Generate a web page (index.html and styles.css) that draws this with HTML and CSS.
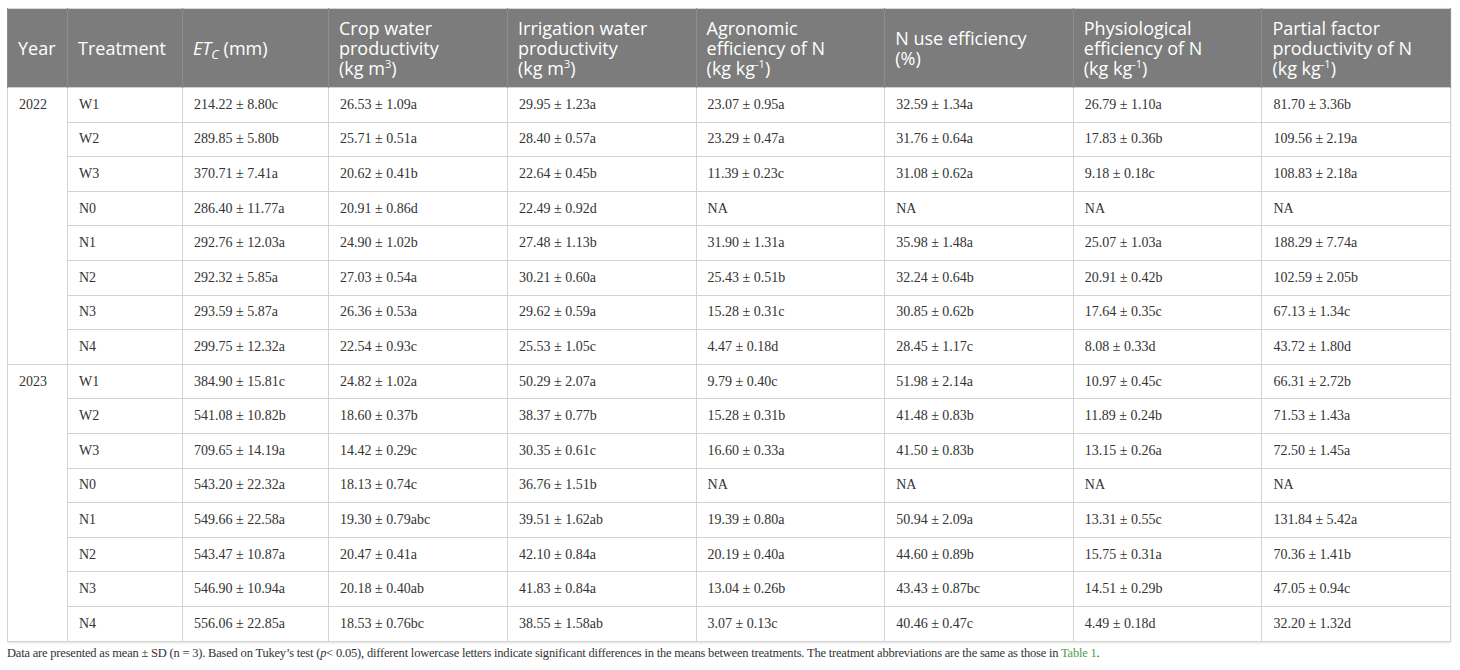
FILE: index.html
```html
<!DOCTYPE html>
<html lang="en">
<head>
    <meta charset="UTF-8">
    <meta name="viewport" content="width=device-width, initial-scale=1.0">
    <title>Water and N use efficiency</title>
    <link rel="stylesheet" href="styles.css">
</head>
<body>
    <div class="table-wrap">
        <table class="data-table">
            <colgroup>
                <col class="c-year">
                <col class="c-treat">
                <col class="c-etc">
                <col class="c-crop">
                <col class="c-wide">
                <col class="c-wide">
                <col class="c-wide">
                <col class="c-wide">
                <col class="c-wide">
            </colgroup>
            <thead>
                <tr>
                    <th>Year</th>
                    <th>Treatment</th>
                    <th><em>ET<sub>C</sub></em> (mm)</th>
                    <th>Crop water<br>productivity<br>(kg m<sup>3</sup>)</th>
                    <th>Irrigation water<br>productivity<br>(kg m<sup>3</sup>)</th>
                    <th>Agronomic<br>efficiency of N<br>(kg kg<sup>-1</sup>)</th>
                    <th>N use efficiency<br>(%)</th>
                    <th>Physiological<br>efficiency of N<br>(kg kg<sup>-1</sup>)</th>
                    <th>Partial factor<br>productivity of N<br>(kg kg<sup>-1</sup>)</th>
                </tr>
            </thead>
            <tbody>
                <tr>
                    <td class="year" rowspan="8">2022</td>
                    <td>W1</td><td>214.22 ± 8.80c</td><td>26.53 ± 1.09a</td><td>29.95 ± 1.23a</td><td>23.07 ± 0.95a</td><td>32.59 ± 1.34a</td><td>26.79 ± 1.10a</td><td>81.70 ± 3.36b</td>
                </tr>
                <tr><td>W2</td><td>289.85 ± 5.80b</td><td>25.71 ± 0.51a</td><td>28.40 ± 0.57a</td><td>23.29 ± 0.47a</td><td>31.76 ± 0.64a</td><td>17.83 ± 0.36b</td><td>109.56 ± 2.19a</td></tr>
                <tr><td>W3</td><td>370.71 ± 7.41a</td><td>20.62 ± 0.41b</td><td>22.64 ± 0.45b</td><td>11.39 ± 0.23c</td><td>31.08 ± 0.62a</td><td>9.18 ± 0.18c</td><td>108.83 ± 2.18a</td></tr>
                <tr><td>N0</td><td>286.40 ± 11.77a</td><td>20.91 ± 0.86d</td><td>22.49 ± 0.92d</td><td>NA</td><td>NA</td><td>NA</td><td>NA</td></tr>
                <tr><td>N1</td><td>292.76 ± 12.03a</td><td>24.90 ± 1.02b</td><td>27.48 ± 1.13b</td><td>31.90 ± 1.31a</td><td>35.98 ± 1.48a</td><td>25.07 ± 1.03a</td><td>188.29 ± 7.74a</td></tr>
                <tr><td>N2</td><td>292.32 ± 5.85a</td><td>27.03 ± 0.54a</td><td>30.21 ± 0.60a</td><td>25.43 ± 0.51b</td><td>32.24 ± 0.64b</td><td>20.91 ± 0.42b</td><td>102.59 ± 2.05b</td></tr>
                <tr><td>N3</td><td>293.59 ± 5.87a</td><td>26.36 ± 0.53a</td><td>29.62 ± 0.59a</td><td>15.28 ± 0.31c</td><td>30.85 ± 0.62b</td><td>17.64 ± 0.35c</td><td>67.13 ± 1.34c</td></tr>
                <tr><td>N4</td><td>299.75 ± 12.32a</td><td>22.54 ± 0.93c</td><td>25.53 ± 1.05c</td><td>4.47 ± 0.18d</td><td>28.45 ± 1.17c</td><td>8.08 ± 0.33d</td><td>43.72 ± 1.80d</td></tr>
                <tr>
                    <td class="year" rowspan="8">2023</td>
                    <td>W1</td><td>384.90 ± 15.81c</td><td>24.82 ± 1.02a</td><td>50.29 ± 2.07a</td><td>9.79 ± 0.40c</td><td>51.98 ± 2.14a</td><td>10.97 ± 0.45c</td><td>66.31 ± 2.72b</td>
                </tr>
                <tr><td>W2</td><td>541.08 ± 10.82b</td><td>18.60 ± 0.37b</td><td>38.37 ± 0.77b</td><td>15.28 ± 0.31b</td><td>41.48 ± 0.83b</td><td>11.89 ± 0.24b</td><td>71.53 ± 1.43a</td></tr>
                <tr><td>W3</td><td>709.65 ± 14.19a</td><td>14.42 ± 0.29c</td><td>30.35 ± 0.61c</td><td>16.60 ± 0.33a</td><td>41.50 ± 0.83b</td><td>13.15 ± 0.26a</td><td>72.50 ± 1.45a</td></tr>
                <tr><td>N0</td><td>543.20 ± 22.32a</td><td>18.13 ± 0.74c</td><td>36.76 ± 1.51b</td><td>NA</td><td>NA</td><td>NA</td><td>NA</td></tr>
                <tr><td>N1</td><td>549.66 ± 22.58a</td><td>19.30 ± 0.79abc</td><td>39.51 ± 1.62ab</td><td>19.39 ± 0.80a</td><td>50.94 ± 2.09a</td><td>13.31 ± 0.55c</td><td>131.84 ± 5.42a</td></tr>
                <tr><td>N2</td><td>543.47 ± 10.87a</td><td>20.47 ± 0.41a</td><td>42.10 ± 0.84a</td><td>20.19 ± 0.40a</td><td>44.60 ± 0.89b</td><td>15.75 ± 0.31a</td><td>70.36 ± 1.41b</td></tr>
                <tr><td>N3</td><td>546.90 ± 10.94a</td><td>20.18 ± 0.40ab</td><td>41.83 ± 0.84a</td><td>13.04 ± 0.26b</td><td>43.43 ± 0.87bc</td><td>14.51 ± 0.29b</td><td>47.05 ± 0.94c</td></tr>
                <tr><td>N4</td><td>556.06 ± 22.85a</td><td>18.53 ± 0.76bc</td><td>38.55 ± 1.58ab</td><td>3.07 ± 0.13c</td><td>40.46 ± 0.47c</td><td>4.49 ± 0.18d</td><td>32.20 ± 1.32d</td></tr>
            </tbody>
        </table>
    </div>
    <p class="table-note">Data are presented as mean ± SD (n = 3). Based on Tukey’s test (<em>p</em>&lt; 0.05), different lowercase letters indicate significant differences in the means between treatments. The treatment abbreviations are the same as those in <a class="ref-link" href="#">Table 1</a>.</p>
</body>
</html>
```

FILE: styles.css
```css
body {
    margin: 0;
    padding: 8px 10px 0 7px;
    background: #fff;
    color: #222;
}
.table-wrap {
    width: 1443px;
    box-shadow: 1px 1px 2px rgba(0, 0, 0, 0.12);
}
.data-table {
    width: 100%;
    table-layout: fixed;
    border-collapse: collapse;
    border: 1px solid #d6d6d6;
}
.c-year { width: 60px; }
.c-treat { width: 115px; }
.c-etc { width: 146px; }
.c-crop { width: 179px; }
.c-wide { width: 188.6px; }

.data-table th {
    background: #7b7c7b;
    color: #fff;
    font-family: "Open Sans", "DejaVu Sans", sans-serif;
    font-weight: 400;
    font-size: 18px;
    line-height: 20px;
    text-align: left;
    vertical-align: middle;
    white-space: nowrap;
    height: 78px;
    padding: 0 10px;
    border-left: 1px solid #8c8d8c;
    border-right: 1px solid #8c8d8c;
}
.data-table th sup {
    font-size: 11px;
    line-height: 0;
    vertical-align: 7px;
}
.data-table th sub {
    font-size: 13px;
    line-height: 0;
    vertical-align: -4px;
}
.data-table td {
    font-family: "Liberation Serif", "Times New Roman", serif;
    font-size: 14px;
    color: #333;
    height: 33.6px;
    padding: 0 11px;
    border: 1px solid #d2d2d2;
    vertical-align: middle;
    white-space: nowrap;
}
.data-table td.year {
    vertical-align: top;
    padding-top: 9px;
}
.table-note {
    margin: 4px 0 0 0;
    font-family: "Liberation Serif", "Times New Roman", serif;
    font-size: 12.5px;
    letter-spacing: -0.2px;
    color: #333;
}
.ref-link {
    color: #4c9d4c;
    text-decoration: none;
}
```
